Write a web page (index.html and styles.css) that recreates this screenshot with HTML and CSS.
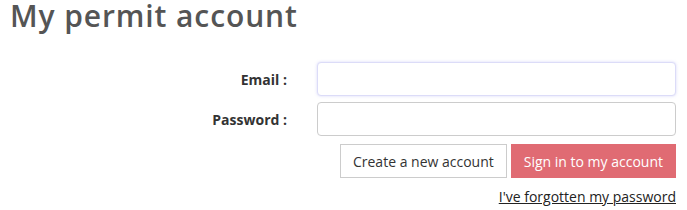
FILE: index.html
```html
<!DOCTYPE html>
<html>
<head>
    <meta charset="UTF-8">
    <title>My permit account</title>
    <link rel="stylesheet" href="styles.css">
</head>
<body>
    <div class="page">
        <h1>My permit account</h1>
        <form class="login-form" onsubmit="return false;">
            <label for="email">Email :</label>
            <input type="text" id="email" class="field field-focus" autofocus>
            <label for="password">Password :</label>
            <input type="password" id="password" class="field">
            <div class="actions">
                <button type="button" class="btn btn-plain">Create a new account</button>
                <button type="submit" class="btn btn-primary">Sign in to my account</button>
            </div>
            <div class="forgot">
                <a href="#">I've forgotten my password</a>
            </div>
        </form>
    </div>
</body>
</html>
```

FILE: styles.css
```css
body {
    margin: 0;
    font-family: 'Open Sans', 'Noto Sans', sans-serif;
    color: #333;
    background: #fff;
}

.page {
    padding: 0 11px 0 10px;
}

h1 {
    margin: 0;
    font-size: 30px;
    font-weight: 600;
    letter-spacing: 0.9px;
    line-height: 32px;
    color: #555;
}

.login-form {
    display: grid;
    grid-template-columns: 277px 1fr;
    column-gap: 30px;
    row-gap: 6px;
    align-items: center;
    margin-top: 30px;
}

.login-form label {
    text-align: right;
    font-size: 14px;
    font-weight: 700;
    color: #333;
}

.field {
    box-sizing: border-box;
    height: 34px;
    width: 100%;
    border: 1px solid #ccc;
    border-radius: 4px;
    padding: 6px 12px;
    font-family: inherit;
    font-size: 14px;
    outline: none;
}

.field-focus {
    border-color: #dcdcf8;
    box-shadow: 0 0 3px rgba(140, 140, 240, 0.35);
}

.actions {
    grid-column: 2;
    display: flex;
    justify-content: flex-end;
    gap: 4px;
    margin-top: 2px;
}

.btn {
    box-sizing: border-box;
    height: 34px;
    padding: 0 12px;
    font-family: inherit;
    font-size: 14px;
    border-radius: 0;
    cursor: pointer;
}

.btn-plain {
    background: #fff;
    color: #333;
    border: 1px solid #ccc;
}

.btn-primary {
    background: #e06b73;
    color: #fff;
    border: 1px solid #e06b73;
}

.forgot {
    grid-column: 2;
    text-align: right;
    margin-top: 1px;
}

.forgot a {
    font-size: 14px;
    color: #222;
    text-decoration: underline;
}
```
